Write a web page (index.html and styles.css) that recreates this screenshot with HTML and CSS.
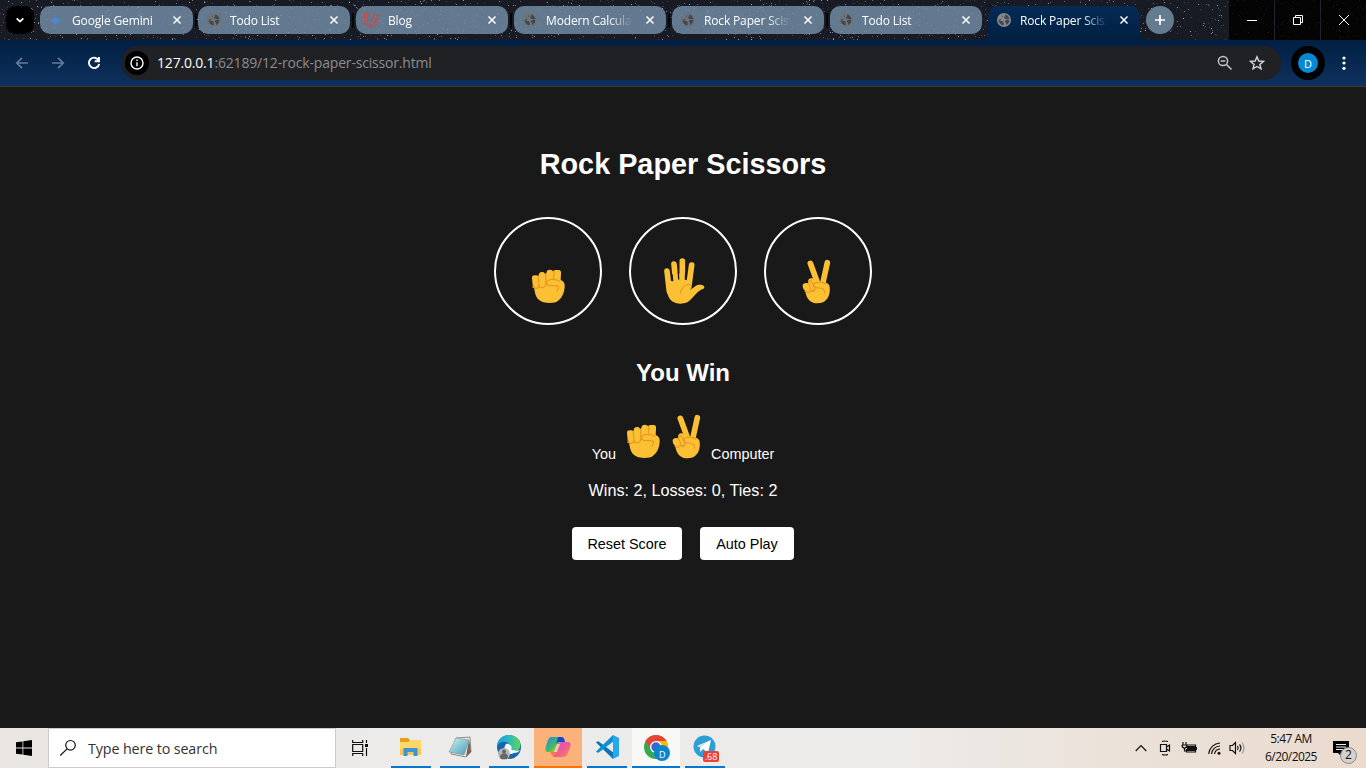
FILE: index.html
```html
<!DOCTYPE html>
<html lang="en">
<head>
<meta charset="utf-8">
<title>Rock Paper Scissors</title>
<link rel="stylesheet" href="styles.css">
</head>
<body>
<svg class="defs" width="0" height="0" aria-hidden="true">
  <defs>
    <symbol id="globe" viewBox="0 0 14 14"><circle cx="7" cy="7" r="7"/><path class="land" d="M6.8 1.8 4.8 3.5 5.2 5 3.6 6 1.8 6.6 3 8h2.6l1 1.3.2 3A5.5 5.5 0 0 1 1.5 7L3 8M8 1.6l.2 1.6L7 4.3l.7 1.5 2.4.4 2.3 1.2A5.4 5.4 0 0 1 9 12V9.8L7.6 8.6 8.2 7.4 12.4 6A5.5 5.5 0 0 0 8 1.6Z"/></symbol>
    <symbol id="close" viewBox="0 0 10 10"><path d="M1.5 1.5l7 7M8.5 1.5l-7 7"/></symbol>
    <symbol id="rock" viewBox="0 0 180 180">
      <path class="skin" d="M36 77c0-5 3-7 8-7h5l7 2c0-8 3-12 10-12 5 0 8 2 9 6l4-2c0-8 5-11 11-11 6 0 9 3 10 8 0-6 4-7 9-7h7c6 0 8 5 7 12l-1 18c9 3 13 10 12 21-1 17-7 30-18 40-7 7-15 8-29 8-17 0-29-5-37-17-5-9-6-19-8-30-4-6-5-15-6-29Z"/>
      <path class="crease" d="M39 97c2 16 16 16 18 2M57 100c2 9 14 10 18 2M55 73l2 31M77 67v34M101 57v25M38 105c7 5 15 4 20-1M119 88c-8-7-28-8-36-2-7 6-3 14 7 15h19c9 1 8 9 2 16"/>
    </symbol>
    <symbol id="paper" viewBox="0 0 180 180">
      <g class="fingers"><path d="M36 57l7 61M57 36l6 65M82 27v71M110 39l-9 67"/></g>
      <path class="skin" d="M36 87h21l2-22h17l4 19h15l9-5-2 27 3 8c9-5 15-12 21-14 9-3 19-1 22 4 1 5-4 7-10 9-13 7-20 19-30 29-9 10-18 13-31 13-18 0-31-7-37-22-5-12-4-27-4-46Z"/>
      <path class="crease" d="M76 123c5-19 16-28 31-24"/>
      <path class="gap" d="M51 68l2 18M70 62l1 19M92 62l-1 19"/>
    </symbol>
    <symbol id="scissors" viewBox="0 0 180 180">
      <g class="fingers"><path d="M61 34l22 60M112 32L98 96"/></g>
      <path class="skin" d="M38 101c0-5 4-8 10-8l7 1c-2-8 0-13 6-15 7-2 12 1 17 11 15-6 40 2 41 14 2 19-3 34-14 43-10 9-36 9-46-1-9-8-12-20-13-29-5-4-8-10-8-16Z"/>
      <path class="crease" d="M45 118c8 5 15 3 18-5l-7-20c-2-9 7-9 10-2l8 18c-2 9-8 10-14 5M72 95c9-7 27-6 36 1M72 97c-2 8 6 11 16 11 10 0 18 7 16 15M74 109c2 6-3 11-8 10"/>
    </symbol>
  </defs>
</svg>

<div class="screen">
  <header class="tabstrip">
    <canvas class="stars" width="1366" height="40"></canvas>
    <button class="tab-search"><svg width="10" height="10" viewBox="0 0 10 10"><path d="M1.7 3.3 5 6.6 8.3 3.3"/></svg></button>
    <div class="tabs">
      <div class="tab"><svg class="favicon" viewBox="0 0 14 14"><defs><linearGradient id="gem"><stop stop-color="#9571b8"/><stop offset=".5" stop-color="#4a84db"/><stop offset="1" stop-color="#16a3e4"/></linearGradient></defs><path fill="url(#gem)" d="M7 0Q7.5 6.3 14 7 7.5 7.5 7 14 6.5 7.5 0 7 6.5 6.3 7 0Z"/></svg><span class="title gemini">Google Gemini</span><svg class="close"><use href="#close"/></svg></div>
      <div class="tab"><svg class="favicon globe"><use href="#globe"/></svg><span class="title">Todo List</span><svg class="close"><use href="#close"/></svg></div>
      <div class="tab"><svg class="favicon laravel" viewBox="0 0 16 16"><path d="M.5 1.5 3 .5l2.5 1v7.8L8 8V4.5L11.7 2 15.5 4v3.8L12 10v3l-5 2.5-6.5-3.8ZM.5 1.5 3 3l2.5-1.5M3 3v8l4 2.3 5-3.3M8 4.5 12 7l3.5-3M12 7v3L8 8M7 13.3v2.2"/></svg><span class="title">Blog</span><svg class="close"><use href="#close"/></svg></div>
      <div class="tab"><svg class="favicon globe"><use href="#globe"/></svg><span class="title fade">Modern Calculator</span><svg class="close"><use href="#close"/></svg></div>
      <div class="tab"><svg class="favicon globe"><use href="#globe"/></svg><span class="title fade">Rock Paper Scissors</span><svg class="close"><use href="#close"/></svg></div>
      <div class="tab"><svg class="favicon globe"><use href="#globe"/></svg><span class="title">Todo List</span><svg class="close"><use href="#close"/></svg></div>
      <div class="tab active"><svg class="favicon globe"><use href="#globe"/></svg><span class="title fade">Rock Paper Scissors</span><svg class="close"><use href="#close"/></svg></div>
    </div>
    <button class="new-tab"><svg width="12" height="12" viewBox="0 0 12 12"><path d="M6 1v10M1 6h10"/></svg></button>
    <div class="window-controls">
      <span><svg width="12" height="12" viewBox="0 0 12 12"><path d="M1 6.5h10"/></svg></span>
      <span><svg width="12" height="12" viewBox="0 0 12 12"><path d="M1.5 3.5h7v7h-7zM3.5 3.5v-2h7v7h-2"/></svg></span>
      <span><svg width="12" height="12" viewBox="0 0 12 12"><path d="M1 1l10 10M11 1 1 11"/></svg></span>
    </div>
  </header>

  <nav class="toolbar">
    <svg class="nav dim" viewBox="0 0 14 14"><path d="M13 7H2M7 1.8 1.8 7 7 12.2"/></svg>
    <svg class="nav dim" viewBox="0 0 14 14"><path d="M1 7h11M7 1.8 12.2 7 7 12.2"/></svg>
    <svg class="nav reload" viewBox="0 0 14 14"><path d="M11.6 4.2A5.2 5.2 0 1 0 12.2 8M12 1v4.3H7.7"/></svg>
    <div class="omnibox">
      <span class="site-info"><svg width="14" height="14" viewBox="0 0 14 14"><circle cx="7" cy="7" r="6"/><path d="M7 6.3v4M7 3.5v1.6"/></svg></span>
      <span class="url"><b>127.0.0.1</b>:62189/12-rock-paper-scissor.html</span>
      <svg class="zoom-icon" width="16" height="16" viewBox="0 0 16 16"><circle cx="6" cy="6" r="4.6"/><path d="M3.7 6h4.6M9.5 9.5l5 5"/></svg>
      <svg class="star-icon" width="16" height="16" viewBox="0 0 16 16"><path d="M8 1.8 9.8 6l4.6.4-3.5 3 1.1 4.5L8 11.500l-4 2.400 1.100-4.500-3.500-3L6.200 6Z"/></svg>
    </div>
    <span class="profile"><span>D</span></span>
    <svg class="menu" width="4" height="16" viewBox="0 0 4 16"><circle cx="2" cy="3" r="1.600"/><circle cx="2" cy="8" r="1.600"/><circle cx="2" cy="13.300" r="1.600"/></svg>
  </nav>

  <main class="game">
    <h1>Rock Paper Scissors</h1>
    <div class="moves">
      <button class="move"><svg class="hand"><use href="#rock"/></svg></button>
      <button class="move"><svg class="hand"><use href="#paper"/></svg></button>
      <button class="move"><svg class="hand"><use href="#scissors"/></svg></button>
    </div>
    <h2>You Win</h2>
    <div class="result">
      <span>You</span>
      <svg class="hand first"><use href="#rock"/></svg>
      <svg class="hand second"><use href="#scissors"/></svg>
      <span>Computer</span>
    </div>
    <p class="score">Wins: 2, Losses: 0, Ties: 2</p>
    <div class="actions"><button class="reset">Reset Score</button><button class="auto">Auto Play</button></div>
  </main>

  <footer class="taskbar">
    <span class="start"><svg width="16" height="16" viewBox="0 0 16 16"><path d="M0 2.300 6.500 1.400V7.500H0ZM7.300 1.200 16 0V7.500H7.300ZM0 8.400H6.500V14.600L0 13.700ZM7.300 8.400H16V16L7.300 14.800Z"/></svg></span>
    <div class="search"><svg width="18" height="18" viewBox="0 0 18 18"><circle cx="11.500" cy="6.300" r="4.800"/><path d="M8 9.800 1.300 16.500"/></svg><span>Type here to search</span></div>
    <svg class="task-view" width="17" height="16" viewBox="0 0 17 16"><path d="M.700 0v2.500h10V0M.700 16v-2.500h10V16M.700 4.500h10v7H.700zM14.500 0v3M14.500 8v8"/><path class="solid" d="M13 4h3v3h-3z"/></svg>
    <div class="apps">
      <span class="app"><svg width="22" height="20" viewBox="0 0 22 20"><path fill="#e2a11c" d="M0 1h8l2 2-2 3H0z"/><path fill="#ffd667" d="M0 5h9l2-2h10v15H0z"/><path fill="#fbc748" d="M0 12h21v6H0z"/><path fill="#3b94d6" d="M3.500 19v-8h14v8h-4v-4h-6v4z"/></svg></span>
      <span class="app"><svg width="24" height="24" viewBox="0 0 24 24"><defs><linearGradient id="note" y2="1"><stop stop-color="#d3f1f1"/><stop offset="1" stop-color="#409eb7"/></linearGradient></defs><path fill="#e3e4e5" stroke="#777" stroke-width=".8" d="M8 3 22 2l1 15-5 5-15-3z"/><path fill="#746653" d="m21 4 2 13-5 5z"/><path fill="url(#note)" stroke="#7b8b8e" stroke-width=".5" d="m8 3 13 2-5 15L1 17z"/></svg></span>
      <span class="app"><svg width="26" height="26" viewBox="0 0 26 26"><defs><linearGradient id="edge"><stop stop-color="#1a9fde"/><stop offset=".5" stop-color="#27b9c1"/><stop offset="1" stop-color="#69d64b"/></linearGradient></defs><circle cx="13" cy="13" r="12" fill="#1765ad"/><path fill="url(#edge)" d="M1 13C1 6 6 1 13 1c9 0 14 9 10 14-2 3-7 3-9 1 2-4-2-9-7-8-3 0-5 2-6 5Z"/><path fill="#f3f8fa" d="M10 10c-4 6-1 13 8 9 3 0 5-1 6-3-2 1-7 1-9-1 2-2-1-6-5-5Z"/><circle cx="8" cy="20" r="6" fill="#b7b6b4"/><circle cx="8" cy="17.500" r="2" fill="#666"/><path fill="#666" d="M4 23c0-5 8-5 8 0l-1 2H5z"/></svg></span>
      <span class="app copilot"><svg width="26" height="24" viewBox="0 0 26 24"><defs><linearGradient id="cpa" y2="1"><stop stop-color="#168ce6"/><stop offset=".55" stop-color="#46b768"/><stop offset="1" stop-color="#ffe000"/></linearGradient><linearGradient id="cpb" y2="1"><stop stop-color="#b55cee"/><stop offset=".5" stop-color="#ee5895"/><stop offset="1" stop-color="#ff8b57"/></linearGradient></defs><path fill="url(#cpa)" d="M6 2h10l-6 15H3c-3 0-3-3-2-6l2-6q1-3 3-3Z"/><path fill="#1648c8" d="M13 2h4q2 0 3 5h-6q-2 0-3 3z"/><path fill="url(#cpb)" d="M16 7h7c3 0 3 3 2 6l-3 7q-1 2-4 2H8l5-13q1-2 3-2Z"/><path fill="#fb784f" d="M5 17h7l-3 5q-2-1-4-5Z"/><path fill="#fbc7a1" d="m12 9h3l-3 8h-3z"/></svg></span>
      <span class="app"><svg width="26" height="26" viewBox="0 0 26 26"><path fill="#0877b9" d="M2 8.500 4 7l16 12-1 6z"/><path fill="#0c92d2" d="M2 17.500 4 19 20 7l-1-6z"/><path fill="#27a7ed" d="m19 1 6 3v18l-6 3z"/></svg></span>
      <span class="app chrome"><svg width="28" height="28" viewBox="0 0 28 28"><circle cx="13" cy="13" r="12" fill="#36a852"/><path fill="#ea4335" d="M2.600 7A12 12 0 0 1 23.400 7H13L7.500 15Z"/><path fill="#fbbc04" d="M23.400 7A12 12 0 0 1 13 25L18.500 15 13 7Z"/><circle cx="13" cy="13" r="6" fill="#fff"/><circle cx="13" cy="13" r="4.700" fill="#3367d6"/><circle cx="19" cy="19" r="8" fill="#0984ce"/></svg><b>D</b></span>
      <span class="app telegram"><svg width="24" height="24" viewBox="0 0 24 24"><circle cx="11.500" cy="11.500" r="11" fill="#2d9fd5"/><path fill="#fff" d="m4 11 14-6-3 13-5-4-3 3v-5l7-5-8 5z"/></svg><b>.68</b></span>
    </div>
    <div class="tray">
      <svg class="chevron" width="12" height="8" viewBox="0 0 12 8"><path d="m.7 7 5.300-5.300L11.300 7"/></svg>
      <svg class="camera" width="12" height="16" viewBox="0 0 12 16"><path d="M1.500 4.500h6v7h-6zM7.500 7l3-2v6l-3-2M3 1.500q3-1 6 0M3 14.500q3 1 6 0"/></svg>
      <svg class="battery" width="16" height="12" viewBox="0 0 16 12"><path d="M4.500 3h10v7h-9V7M2 0v3M5 0v3M1 3h5q0 3-2.500 3T1 3M3.500 6v3H5"/><path class="solid" d="M6 4h8v5H6zM15 5h1v3h-1z"/></svg>
      <svg class="wifi" width="13" height="13" viewBox="0 0 13 13"><path d="M.7 12A12 12 0 0 1 12 1M3.500 12A8.800 8.800 0 0 1 12 4M6.500 12A6 6 0 0 1 12 7"/><circle class="solid" cx="11" cy="11.300" r="1.500"/></svg>
      <svg class="sound" width="17" height="14" viewBox="0 0 17 14"><path d="M1 4.500h2.500L6.500 1.500v11l-3-3H1zM8.500 5q1.500 2 0 4M10.500 3.500q3 3.500 0 7"/><path class="soft" d="M13 1.500q4 5.500 0 11"/></svg>
      <div class="clock"><span>5:47 AM</span><span>6/20/2025</span></div>
      <div class="notices"><svg width="16" height="17" viewBox="0 0 16 17"><path d="M0 1h16v12H8v3l-3-3H0z"/><path class="lines" d="M3 4.500h10M3 7h10M3 9.500h7"/></svg><b>2</b></div>
    </div>
  </footer>
</div>
<script src="stars.js"></script>
</body>
</html>
```
FILE: styles.css
```css
* { box-sizing: border-box; }
body { margin: 0; overflow: hidden; background: #191919; font-family: "Liberation Sans", Arial, sans-serif; }
button { border: 0; padding: 0; font: inherit; }
svg { display: block; flex: none; fill: none; stroke: none; }
.defs { position: absolute; }
.screen { width: 1366px; height: 768px; display: flex; flex-direction: column; }

.tabstrip { position: relative; height: 40px; flex: none; display: flex; align-items: flex-start; padding: 6px 0 0 6px; background: #191b24; }
.tabstrip > * { position: relative; }
.tabstrip .stars { position: absolute; left: 0; top: 0; }
.tab-search { width: 28px; height: 28px; border-radius: 9px; background: #000; display: grid; place-items: center; margin-right: 6px; }
.tab-search svg { stroke: #fff; stroke-width: 1.8; }
.tabs { display: flex; gap: 6px; }
.tab { position: relative; width: 152px; height: 28px; border-radius: 10px; background: rgba(113, 141, 166, .83); display: flex; align-items: center; padding: 0 11px 0 9px; color: #fff; font: 12px/16px "Open Sans", "Noto Sans", sans-serif; letter-spacing: -.15px; }
.tab:first-child { width: 153px; margin-right: -1px; padding-right: 11px; }
.tab:not(.active)::after { content: ""; position: absolute; right: -4px; top: 7px; width: 2px; height: 15px; background: #050507; }
.tab:nth-last-child(2)::after { display: none; }
.tab.active { height: 34px; background: #02244a; background: linear-gradient(#052b55, #011f42); border-radius: 10px 10px 0 0; padding-bottom: 6px; }
.tab.active::before { content: ""; position: absolute; left: -7px; right: -7px; bottom: 0; height: 7px; background: radial-gradient(circle at 0 0, transparent 6.5px, #011f42 7px) left / 7px 7px no-repeat, radial-gradient(circle at 100% 0, transparent 6.5px, #011f42 7px) right / 7px 7px no-repeat; }
.favicon { width: 14px; height: 14px; margin-right: 9px; }
.tab:first-child .favicon { width: 13px; height: 13px; margin-right: 10px; }
.tab .laravel { width: 16px; height: 16px; margin: 0 8px 0 -1px; stroke: #d6463e; stroke-width: .9; }
.globe { fill: #6f7478; }
.active .globe { fill: #85888c; }
.land { fill: #43484d; }
.active .land { fill: #15283e; }
.title { width: 87px; overflow: hidden; white-space: nowrap; padding-top: 1px; }
.title.fade { -webkit-mask-image: linear-gradient(90deg, #000 72%, transparent); mask-image: linear-gradient(90deg, #000 72%, transparent); }
.close { width: 10px; height: 10px; margin-left: auto; stroke: #fff; stroke-width: 1.5; }
.new-tab { width: 28px; height: 28px; border-radius: 50%; background: #647b90; display: grid; place-items: center; margin-left: 6px; }
.new-tab svg { stroke: #fff; stroke-width: 1.7; }
.window-controls { margin: -6px 0 0 auto; display: flex; width: 137px; height: 40px; background: rgba(0, 0, 0, .84); }
.window-controls span { flex: 1; display: grid; place-items: center; border-right: 1px solid #22242d; }
.window-controls span:last-child { border: 0; }
.window-controls svg { stroke: #fff; stroke-width: 1; }

.toolbar { height: 47px; flex: none; border-bottom: 1px solid #3a3835; background: linear-gradient(#011f42, #0e315e); display: flex; align-items: center; padding: 0 20px 0 15px; }
.nav { width: 14px; height: 14px; margin-right: 22px; stroke-width: 1.7; }
.dim { stroke: #667b94; }
.reload { stroke: #fff; stroke-width: 1.9; margin-right: 20px; }
.omnibox { width: 1160px; height: 34px; border-radius: 17px; background: #202124; display: flex; align-items: center; padding: 0 16px 0 4px; }
.site-info { width: 24px; height: 24px; border-radius: 50%; background: #000; display: grid; place-items: center; }
.site-info svg { stroke: #fff; stroke-width: 1.4; }
.url { font: 14px/20px "Open Sans", sans-serif; letter-spacing: -.18px; color: #8c8d8f; margin-left: 8px; margin-right: auto; }
.url b { font-weight: 400; color: #fff; }
.zoom-icon { stroke: #c4c5c6; stroke-width: 1.5; margin-right: 16px; }
.star-icon { stroke: #d5d6d7; stroke-width: 1.4; }
.profile { width: 34px; height: 34px; border: 7px solid #000; border-radius: 50%; background: #0788d3; display: grid; place-items: center; color: #fff; font: 11px "Open Sans", sans-serif; margin-left: 10px; }
.menu { fill: #fff; margin-left: auto; }

.game { flex: 1; display: flex; flex-direction: column; align-items: center; padding-top: 61px; color: #fff; background: #191919; }
h1 { margin: 0; font-size: 28.8px; line-height: 33px; }
.moves { display: flex; gap: 27px; margin-top: 36px; }
.move { width: 108px; height: 108px; border: 2px solid #fff; border-radius: 50%; background: transparent; padding: 21px 0 0 24px; }
.move:nth-child(2) { padding-left: 24px; }
.hand { width: 60px; height: 60px; overflow: visible; }
.skin { fill: #fbc033; }
.fingers { stroke: #fbc033; stroke-width: 17; stroke-linecap: round; }
.crease { stroke: #e99922; stroke-width: 3.5; stroke-linecap: round; stroke-linejoin: round; }
.gap { stroke: #191919; stroke-width: 4; stroke-linecap: round; }
h2 { margin: 34px 0 0; font-size: 24px; line-height: 28px; }
.result { display: flex; align-items: flex-end; height: 76px; font-size: 14.4px; line-height: 17px; }
.result .first { margin: 0 -15px 4px -1px; transform: translateY(8px); }
.result .second { margin: 0 -9px 4px 0; transform: translateY(8px); }
.score { margin: 17px 0 0; font-size: 16.2px; line-height: 20px; }
.actions { display: flex; gap: 18px; margin-top: 27px; }
.actions button { width: 110px; height: 33px; background: #fff; color: #000; border-radius: 4px; font-size: 14.4px; }
.actions .auto { width: 94px; }

.taskbar { height: 40px; flex: none; display: flex; align-items: center; color: #111; background: linear-gradient(90deg, #e9e5e1, #edebea 30%, #edebea 65%, #ebe1d8 83%, #eadbce); font-family: "Open Sans", sans-serif; }
.start { width: 48px; padding-left: 16px; }
.start svg { fill: #000; }
.search { width: 288px; height: 40px; border: 1px solid #ccc; background: #fff; display: flex; align-items: center; gap: 11px; padding-left: 10px; font-size: 14.3px; color: #333; letter-spacing: -.12px; }
.search svg { stroke: #111; stroke-width: 1.2; }
.task-view { margin-left: 16px; stroke: #111; stroke-width: 1.2; }
.solid { fill: #111; stroke: none; }
.apps { display: flex; gap: 9px; margin-left: 22px; height: 40px; }
.app { position: relative; width: 40px; height: 40px; display: grid; place-items: center; border-bottom: 2px solid #0078d4; }
.copilot { width: 48px; margin: 0 -4px; background: #fbb27a; border-color: #ff7200; }
.chrome { width: 48px; margin: 0 -4px; background: #f8f8f7; }
.chrome svg { transform: translate(1px, 1px); }
.chrome b { position: absolute; left: 27px; top: 20px; color: #fff; font-size: 9px; line-height: 13px; font-weight: 400; }
.telegram b { position: absolute; left: 18px; top: 23px; width: 16px; height: 11px; border-radius: 2px; background: #ef4038; color: #fff; font-size: 9px; line-height: 11px; text-align: center; font-weight: 400; }
.tray { margin-left: auto; width: 231px; height: 40px; display: flex; align-items: center; font-size: 12px; }
.tray > svg { stroke: #111; stroke-width: 1.2; }
.camera { margin-left: 12px; }
.battery { margin-left: 10px; }
.wifi { margin-left: 11px; }
.sound { margin-left: 8px; }
.tray .soft { stroke: #999; }
.clock { width: 64px; margin-left: 13px; display: flex; flex-direction: column; text-align: center; line-height: 18px; letter-spacing: -.55px; }
.notices { position: relative; margin-left: 10px; }
.notices svg { fill: #000; }
.lines { stroke: #eee; stroke-width: 1; }
.notices b { position: absolute; left: 7px; top: 7px; width: 17px; height: 17px; border: 1px solid #888; border-radius: 50%; background: #d4d0cc; font: 12px/14px "Open Sans", sans-serif; text-align: center; }
```
FILE: stars.js
```
const canvas = document.querySelector(".stars");
const ctx = canvas.getContext("2d");
let seed = 71;
const random = () => (seed = (seed * 16807) % 2147483647) / 2147483647;
for (let i = 0; i < 3600; i++) {
  const x = Math.floor(random() * 1366);
  const y = Math.floor(random() * 40);
  const a = Math.pow(random(), 3) * 0.75;
  ctx.fillStyle = `rgba(210,215,235,${a})`;
  ctx.fillRect(x, y, 1, 1);
}
```
